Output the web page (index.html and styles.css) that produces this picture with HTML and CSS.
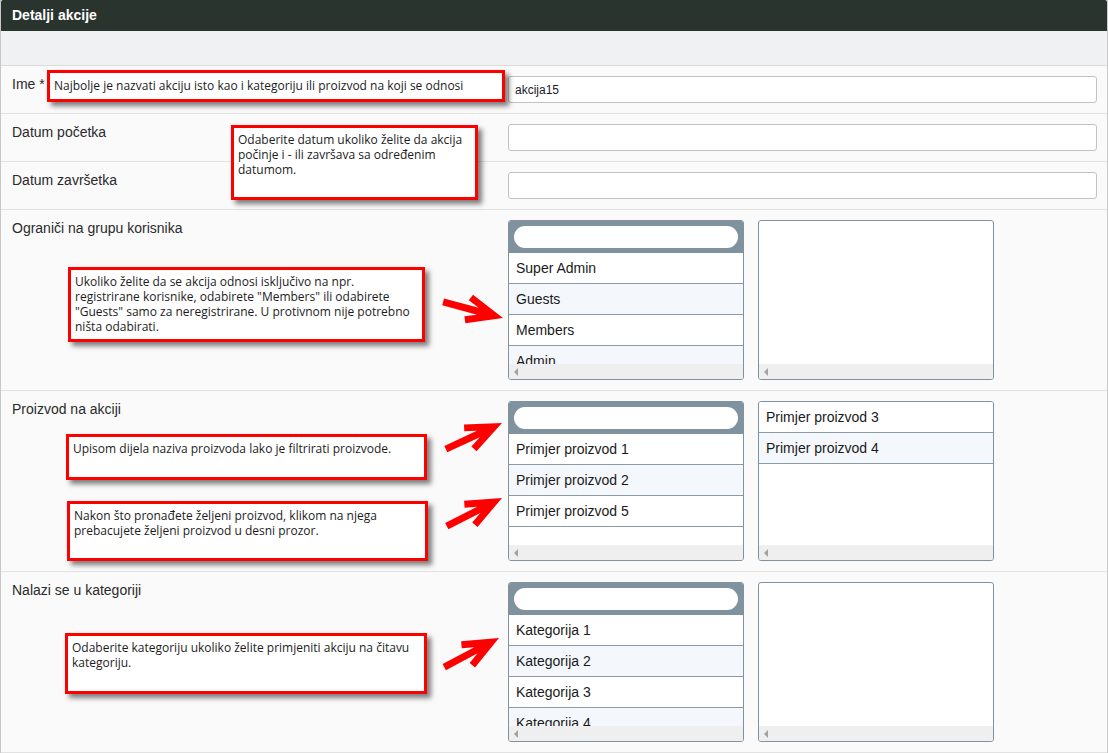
FILE: index.html
```html
<!DOCTYPE html>
<html lang="hr">
<head>
<meta charset="utf-8">
<title>Detalji akcije</title>
<link rel="stylesheet" href="styles.css">
</head>
<body>
<div class="panel">
  <div class="panel-title">Detalji akcije</div>
  <div class="toolbar"></div>

  <div class="row">
    <div class="label">Ime *</div>
    <div class="field"><input class="text-input" type="text" value="akcija15"></div>
    <div class="note note-ime">Najbolje je nazvati akciju isto kao i kategoriju ili proizvod na koji se odnosi</div>
  </div>

  <div class="row">
    <div class="label">Datum početka</div>
    <div class="field"><input class="text-input" type="text" value=""></div>
    <div class="note note-datum">Odaberite datum ukoliko želite da akcija<br>počinje i - ili završava sa određenim<br>datumom.</div>
  </div>

  <div class="row">
    <div class="label">Datum završetka</div>
    <div class="field"><input class="text-input" type="text" value=""></div>
  </div>

  <div class="row">
    <div class="label">Ograniči na grupu korisnika</div>
    <div class="field lists">
      <div class="listbox">
        <div class="lb-head"><div class="lb-filter"></div></div>
        <div class="lb-items">
          <div class="item">Super Admin</div>
          <div class="item">Guests</div>
          <div class="item">Members</div>
          <div class="item">Admin</div>
        </div>
        <div class="lb-scroll"><span class="lb-arrow"></span></div>
      </div>
      <div class="listbox">
        <div class="lb-items"></div>
        <div class="lb-scroll"><span class="lb-arrow"></span></div>
      </div>
    </div>
    <div class="note note-grupa">Ukoliko želite da se akcija odnosi isključivo na npr.<br>registrirane korisnike, odabirete "Members" ili odabirete<br>"Guests" samo za neregistrirane. U protivnom nije potrebno<br>ništa odabirati.</div>
    <svg class="arrows" xmlns="http://www.w3.org/2000/svg">
      <path class="arrow" transform="translate(502 108) rotate(15)" d="M0,0 L-35,-14.8 L-37.7,-8.4 L-26.1,-3.5 L-62,-3.5 L-62,3.5 L-26.1,3.5 L-37.7,8.4 L-35,14.8 Z"/>
    </svg>
  </div>

  <div class="row">
    <div class="label">Proizvod na akciji</div>
    <div class="field lists">
      <div class="listbox">
        <div class="lb-head"><div class="lb-filter"></div></div>
        <div class="lb-items">
          <div class="item">Primjer proizvod 1</div>
          <div class="item">Primjer proizvod 2</div>
          <div class="item">Primjer proizvod 5</div>
        </div>
        <div class="lb-scroll"><span class="lb-arrow"></span></div>
      </div>
      <div class="listbox">
        <div class="lb-items">
          <div class="item">Primjer proizvod 3</div>
          <div class="item">Primjer proizvod 4</div>
        </div>
        <div class="lb-scroll"><span class="lb-arrow"></span></div>
      </div>
    </div>
    <div class="note note-filter">Upisom dijela naziva proizvoda lako je filtrirati proizvode.</div>
    <div class="note note-klik">Nakon što pronađete željeni proizvod, klikom na njega<br>prebacujete željeni proizvod u desni prozor.</div>
    <svg class="arrows" xmlns="http://www.w3.org/2000/svg">
      <path class="arrow" transform="translate(501 32) rotate(-25)" d="M0,0 L-35,-14.8 L-37.7,-8.4 L-26.1,-3.5 L-62,-3.5 L-62,3.5 L-26.1,3.5 L-37.7,8.4 L-35,14.8 Z"/>
      <path class="arrow" transform="translate(501 107) rotate(-27)" d="M0,0 L-35,-14.8 L-37.7,-8.4 L-26.1,-3.5 L-62,-3.5 L-62,3.5 L-26.1,3.5 L-37.7,8.4 L-35,14.8 Z"/>
    </svg>
  </div>

  <div class="row">
    <div class="label">Nalazi se u kategoriji</div>
    <div class="field lists">
      <div class="listbox">
        <div class="lb-head"><div class="lb-filter"></div></div>
        <div class="lb-items">
          <div class="item">Kategorija 1</div>
          <div class="item">Kategorija 2</div>
          <div class="item">Kategorija 3</div>
          <div class="item">Kategorija 4</div>
        </div>
        <div class="lb-scroll"><span class="lb-arrow"></span></div>
      </div>
      <div class="listbox">
        <div class="lb-items"></div>
        <div class="lb-scroll"><span class="lb-arrow"></span></div>
      </div>
    </div>
    <div class="note note-kat">Odaberite kategoriju ukoliko želite primjeniti akciju na čitavu<br>kategoriju.</div>
    <svg class="arrows" xmlns="http://www.w3.org/2000/svg">
      <path class="arrow" transform="translate(498 66) rotate(-28)" d="M0,0 L-35,-14.8 L-37.7,-8.4 L-26.1,-3.5 L-62,-3.5 L-62,3.5 L-26.1,3.5 L-37.7,8.4 L-35,14.8 Z"/>
    </svg>
  </div>
</div>
</body>
</html>
```

FILE: styles.css
```css
html, body {
  margin: 0;
  padding: 0;
  background: #ffffff;
}

body {
  font-family: "Liberation Sans", Arial, sans-serif;
  color: #222;
}

.panel {
  width: 1108px;
  box-sizing: border-box;
  border-left: 1px solid #c8c8c8;
  border-right: 1px solid #c8c8c8;
  background: #fafafa;
}

.panel-title {
  height: 31px;
  line-height: 31px;
  padding-left: 11px;
  background: #2a342e;
  color: #ffffff;
  font-weight: bold;
  font-size: 14px;
  border-radius: 2px 2px 0 0;
}

.toolbar {
  height: 34px;
  background: #f0f1f3;
  border-bottom: 1px solid #dadada;
}

.row {
  position: relative;
  display: grid;
  grid-template-columns: 496px 1fr;
  padding: 10px 10px 10px 11px;
  border-bottom: 1px solid #e2e2e2;
  background: #fafafa;
}

.label {
  font-size: 14px;
  line-height: 16px;
  color: #2a2a2a;
}

.field {
  display: block;
}

.text-input {
  display: block;
  width: 100%;
  height: 27px;
  box-sizing: border-box;
  margin: 0;
  padding: 0 6px;
  border: 1px solid #c2c2c2;
  border-radius: 3px;
  background: #ffffff;
  font-family: "Liberation Sans", Arial, sans-serif;
  font-size: 12px;
  color: #1a1a2a;
  outline: none;
}

.lists {
  display: flex;
  gap: 14px;
}

.listbox {
  width: 236px;
  height: 160px;
  box-sizing: border-box;
  border: 1px solid #7f929e;
  border-radius: 3px;
  background: #ffffff;
  display: flex;
  flex-direction: column;
  overflow: hidden;
}

.lb-head {
  height: 32px;
  flex: none;
  box-sizing: border-box;
  padding: 5px;
  background: #7f929e;
}

.lb-filter {
  height: 22px;
  border-radius: 11px;
  background: #ffffff;
}

.lb-items {
  flex: 1;
  overflow: hidden;
}

.item {
  height: 31px;
  box-sizing: border-box;
  line-height: 30px;
  padding-left: 7px;
  border-bottom: 1px solid #8a9ba7;
  font-size: 14px;
  color: #1a1a1a;
  background: #ffffff;
  white-space: nowrap;
}

.item:nth-child(even) {
  background: #f4f8fc;
}

.lb-scroll {
  height: 15px;
  flex: none;
  background: #efefef;
  display: flex;
  align-items: center;
  padding-left: 5px;
}

.lb-arrow {
  width: 0;
  height: 0;
  border-top: 4px solid transparent;
  border-bottom: 4px solid transparent;
  border-right: 4px solid #a3a3a3;
}

.note {
  position: absolute;
  z-index: 2;
  box-sizing: border-box;
  background: #ffffff;
  border: 3px solid #ff0000;
  box-shadow: 4px 4px 5px rgba(0, 0, 0, 0.5);
  padding: 4px 4px 4px 4px;
  font-family: "Open Sans", "Noto Sans", sans-serif;
  font-size: 12px;
  line-height: 15px;
  color: #1c1c1c;
  white-space: nowrap;
}

.note-ime {
  left: 46px;
  top: 4px;
  width: 458px;
  height: 32px;
  padding-top: 5px;
}

.note-datum {
  left: 230px;
  top: 11px;
  width: 247px;
  height: 75px;
}

.note-grupa {
  left: 67px;
  top: 57px;
  width: 357px;
  height: 75px;
}

.note-filter {
  left: 65px;
  top: 43px;
  width: 361px;
  height: 46px;
}

.note-klik {
  left: 66px;
  top: 110px;
  width: 361px;
  height: 60px;
}

.note-kat {
  left: 64px;
  top: 61px;
  width: 362px;
  height: 61px;
}

.arrows {
  position: absolute;
  left: 0;
  top: 0;
  width: 100%;
  height: 100%;
  overflow: visible;
  z-index: 3;
  pointer-events: none;
}

.arrow {
  fill: #ff0000;
}
```
